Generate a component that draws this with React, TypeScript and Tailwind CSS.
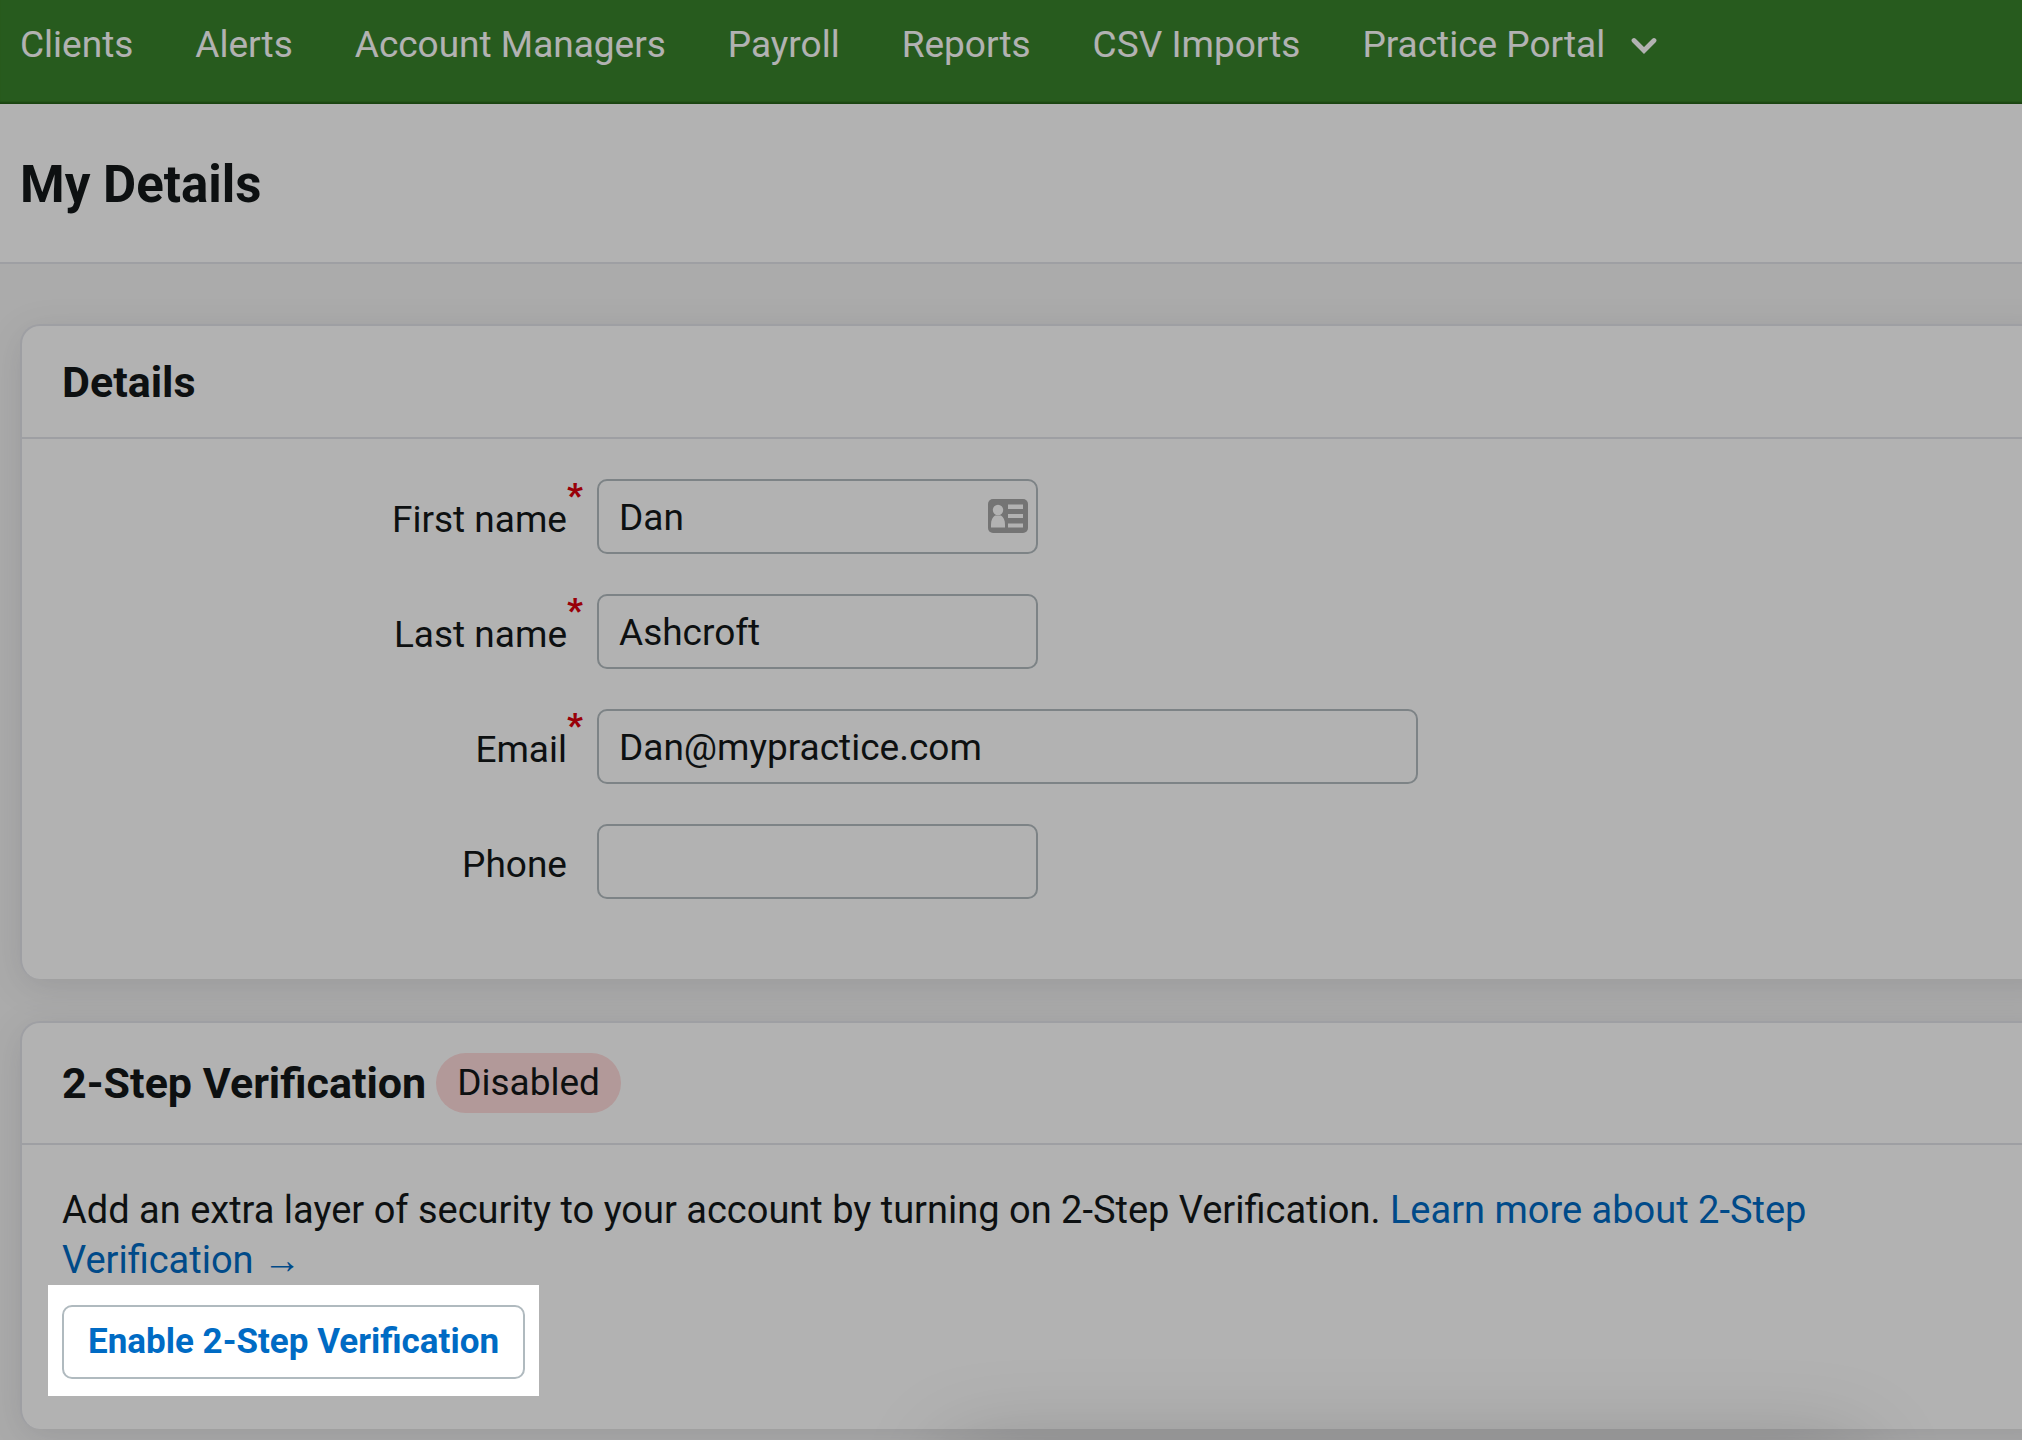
const navItems = ['Clients', 'Alerts', 'Account Managers', 'Payroll', 'Reports', 'CSV Imports']

const fields = [
  { id: 'first-name', label: 'First name', value: 'Dan', required: true, wide: false, card: true },
  { id: 'last-name', label: 'Last name', value: 'Ashcroft', required: true, wide: false, card: false },
  { id: 'email', label: 'Email', value: 'Dan@mypractice.com', required: true, wide: true, card: false },
  { id: 'phone', label: 'Phone', value: '', required: false, wide: false, card: false },
]

function ChevronIcon() {
  return (
    <svg width="26" height="20" viewBox="0 0 26 20" fill="none" aria-hidden="true">
      <path d="M3 5.500l10 10 10-10" stroke="currentColor" strokeWidth="4.8" strokeLinecap="round" />
    </svg>
  )
}

function ContactCardIcon() {
  return (
    <svg width="40" height="34" viewBox="0 0 40 34" aria-hidden="true">
      <rect width="40" height="34" rx="5" fill="#a6a6a6" />
      <g fill="#fff">
        <circle cx="10" cy="11" r="5.2" />
        <path d="M3 28.500v-3c0-4.500 1.500-7 4-9h6c2.500 2 4 4.500 4 9v3z" />
        <rect x="20" y="5.500" width="15" height="4.500" />
        <rect x="20" y="15" width="15" height="4" />
        <rect x="20" y="24.500" width="15" height="4" />
      </g>
    </svg>
  )
}

// Cards run off the right edge of the viewport
function Card({ children }: { children: React.ReactNode }) {
  return (
    <section className="-mr-10 ml-5 rounded-[20px] border-t-2 border-l-2 border-[#e3e4ea] bg-white shadow-[0_8px_36px_rgba(60,65,75,0.13)]">
      {children}
    </section>
  )
}

export default function App() {
  return (
    <div className="relative min-h-screen overflow-hidden bg-[#f5f5f5] font-['Roboto','Liberation_Sans',sans-serif] text-[37px] text-[#131819]">
      {/* Top navigation */}
      <header className="bg-[#39832b] px-5 pt-[21px] pb-[35px] text-white shadow-[inset_0_-3px_2px_-1px_#256018]">
        <nav className="flex items-center gap-[62px] leading-[48px] whitespace-nowrap">
          {navItems.map((item) => (
            <a key={item} href="#">
              {item}
            </a>
          ))}
          <button type="button" className="flex items-center gap-[26px]">
            Practice Portal
            <ChevronIcon />
          </button>
        </nav>
      </header>

      {/* Page title */}
      <div className="border-b-2 border-[#e3e4ea] bg-white px-5 pt-[51px] pb-[47px]">
        <h1 className="text-[51px] leading-[60px] font-bold">My Details</h1>
      </div>

      <main className="flex flex-col gap-[42px] pt-[60px] pb-[11px]">
        <Card>
          <div className="border-b-2 border-[#e3e4ea] px-10 pt-8 pb-[31px]">
            <h2 className="text-[43px] leading-[48px] font-bold">Details</h2>
          </div>
          <form className="flex flex-col gap-10 pt-10 pb-20">
            {fields.map((field) => (
              <div key={field.id} className="flex h-[75px]">
                <label htmlFor={field.id} className="flex w-[575px] items-center justify-end">
                  <span className="pt-[6px]">{field.label}</span>
                  <span className="w-[30px] self-start text-[34px] leading-8 font-black text-[#dc000c]">
                    {field.required && '*'}
                  </span>
                </label>
                <div className={`relative ${field.wide ? 'w-[821px]' : 'w-[441px]'}`}>
                  <input
                    id={field.id}
                    type="text"
                    defaultValue={field.value}
                    className="h-full w-full rounded-[10px] border-2 border-[#b3bcc0] bg-white px-5 pt-[2px]"
                  />
                  {field.card && (
                    <span className="absolute top-5 right-[10px]">
                      <ContactCardIcon />
                    </span>
                  )}
                </div>
              </div>
            ))}
          </form>
        </Card>

        <Card>
          <div className="flex items-center gap-[10px] border-b-2 border-[#e3e4ea] px-10 py-[30px]">
            <h2 className="text-[43px] leading-[48px] font-bold">2-Step Verification</h2>
            <span className="rounded-full bg-[#ffdbdb] px-[21px] leading-[60px]">Disabled</span>
          </div>
          <div className="px-10 pt-10 pb-[33px]">
            <p className="max-w-[1860px] text-[38px] leading-[50px]">
              Add an extra layer of security to your account by turning on 2-Step Verification.{' '}
              <a href="#" className="text-[#006bc4]">
                Learn more about 2-Step Verification →
              </a>
            </p>
            {/* Spotlight: everything outside this box is dimmed by its shadow */}
            <div className="relative z-20 -ml-[14px] w-fit bg-white px-[14px] pt-5 pb-[17px] shadow-[0_0_0_4000px_rgba(0,0,0,0.3)]">
              <button
                type="button"
                className="block h-[74px] rounded-[10px] border-2 border-[#b0babf] px-6 text-[35px] font-bold text-[#006bc4]"
              >
                Enable 2-Step Verification
              </button>
            </div>
          </div>
        </Card>
      </main>

      {/* Shadow of the panel docked below the fold */}
      <div className="absolute top-full left-[47%] z-10 h-20 w-[45%] shadow-[0_10px_90px_rgba(0,0,0,0.22)]" />
    </div>
  )
}
